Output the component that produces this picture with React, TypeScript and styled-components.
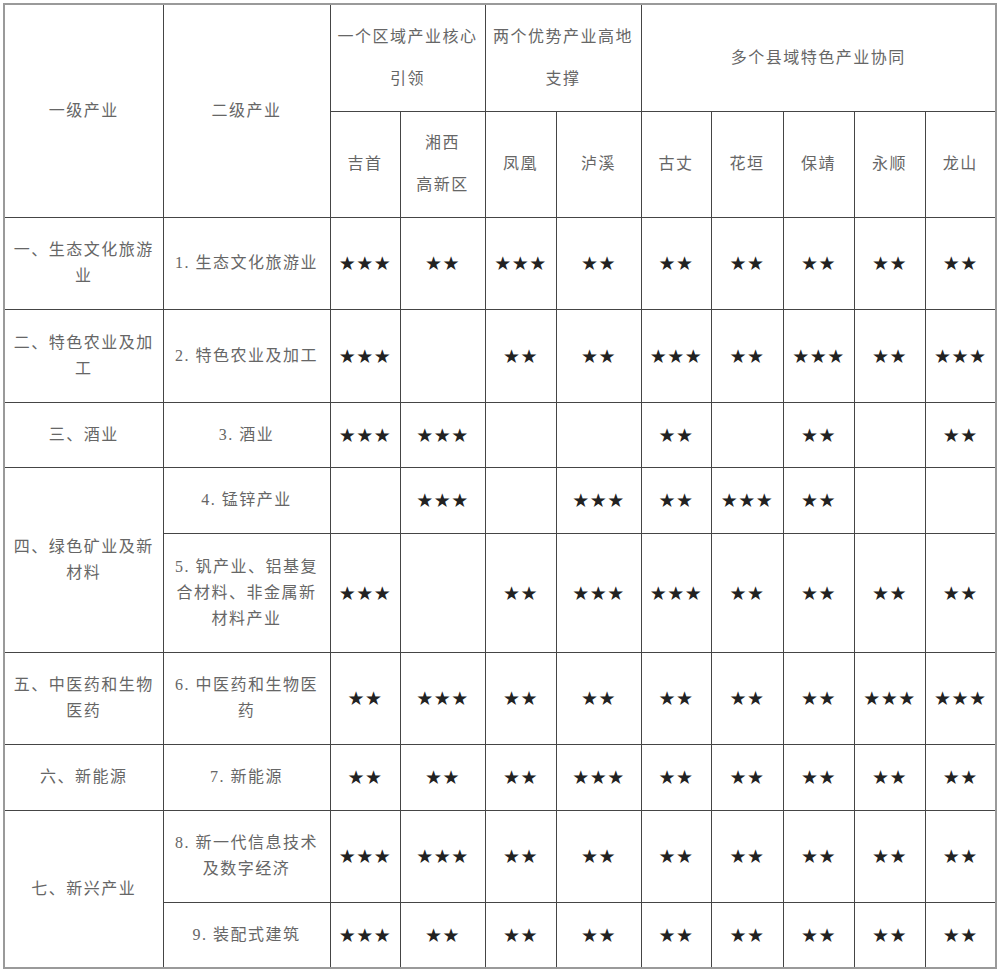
import styled, { createGlobalStyle } from "styled-components";

const GlobalStyle = createGlobalStyle`
    html, body {
        margin: 0;
        padding: 0;
        background: #fff;
    }
    body {
        font-family: "Liberation Serif", "Noto Sans CJK SC", serif;
    }
`

const Wrapper = styled.div`
    padding: 3px 0 0 3px;
`

const Table = styled.table`
    border-collapse: collapse;
    table-layout: fixed;
    width: 994px;
    border: 2px solid #9a9a9a;
    color: #666;
    font-size: 16px;
    letter-spacing: 1.5px;

    td, th {
        border: 1px solid #454545;
        padding: 0 7px;
        text-align: center;
        vertical-align: middle;
        font-weight: normal;
        line-height: 26px;
    }
`

const HeadCell = styled.th<{ $tall?: boolean }>`
    line-height: ${(p) => (p.$tall ? "42px" : "26px")} !important;
`

const Row = styled.tr<{ $h: number }>`
    height: ${(p) => p.$h}px;
`

const StarCell = styled.td`
    color: #222;
    font-family: "DejaVu Sans", sans-serif;
    font-size: 19px;
    letter-spacing: 0.5px;
    padding: 0 !important;
`

const cols = [159, 167, 70, 85, 71, 85, 70, 72, 71, 71, 71];

type Item = {
    first?: string;
    span?: number;
    h: number;
    name: string;
    stars: number[];
};

const items: Item[] = [
    { first: "一、生态文化旅游业", h: 92, name: "1. 生态文化旅游业", stars: [3, 2, 3, 2, 2, 2, 2, 2, 2] },
    { first: "二、特色农业及加工", h: 93, name: "2. 特色农业及加工", stars: [3, 0, 2, 2, 3, 2, 3, 2, 3] },
    { first: "三、酒业", h: 65, name: "3. 酒业", stars: [3, 3, 0, 0, 2, 0, 2, 0, 2] },
    { first: "四、绿色矿业及新材料", span: 2, h: 66, name: "4. 锰锌产业", stars: [0, 3, 0, 3, 2, 3, 2, 0, 0] },
    { h: 119, name: "5. 钒产业、铝基复合材料、非金属新材料产业", stars: [3, 0, 2, 3, 3, 2, 2, 2, 2] },
    { first: "五、中医药和生物医药", h: 92, name: "6. 中医药和生物医药", stars: [2, 3, 2, 2, 2, 2, 2, 3, 3] },
    { first: "六、新能源", h: 66, name: "7. 新能源", stars: [2, 2, 2, 3, 2, 2, 2, 2, 2] },
    { first: "七、新兴产业", span: 2, h: 92, name: "8. 新一代信息技术及数字经济", stars: [3, 3, 2, 2, 2, 2, 2, 2, 2] },
    { h: 66, name: "9. 装配式建筑", stars: [3, 2, 2, 2, 2, 2, 2, 2, 2] },
];

const counties = ["古丈", "花垣", "保靖", "永顺", "龙山"];

export default function App() {
    return (
        <Wrapper>
            <GlobalStyle />
            <Table>
                <colgroup>
                    {cols.map((w, i) => <col key={i} style={{ width: w }} />)}
                </colgroup>
                <thead>
                    <Row $h={107}>
                        <HeadCell rowSpan={2}>一级产业</HeadCell>
                        <HeadCell rowSpan={2}>二级产业</HeadCell>
                        <HeadCell $tall colSpan={2}>一个区域产业核心引领</HeadCell>
                        <HeadCell $tall colSpan={2}>两个优势产业高地支撑</HeadCell>
                        <HeadCell $tall colSpan={5}>多个县域特色产业协同</HeadCell>
                    </Row>
                    <Row $h={106}>
                        <HeadCell $tall>吉首</HeadCell>
                        <HeadCell $tall>湘西<br />高新区</HeadCell>
                        <HeadCell $tall>凤凰</HeadCell>
                        <HeadCell $tall>泸溪</HeadCell>
                        {counties.map((c) => <HeadCell $tall key={c}>{c}</HeadCell>)}
                    </Row>
                </thead>
                <tbody>
                    {items.map((it, i) => (
                        <Row $h={it.h} key={i}>
                            {it.first && <td rowSpan={it.span || 1}>{it.first}</td>}
                            <td>{it.name}</td>
                            {it.stars.map((s, j) => (
                                <StarCell key={j}>{"★".repeat(s)}</StarCell>
                            ))}
                        </Row>
                    ))}
                </tbody>
            </Table>
        </Wrapper>
    )
}
